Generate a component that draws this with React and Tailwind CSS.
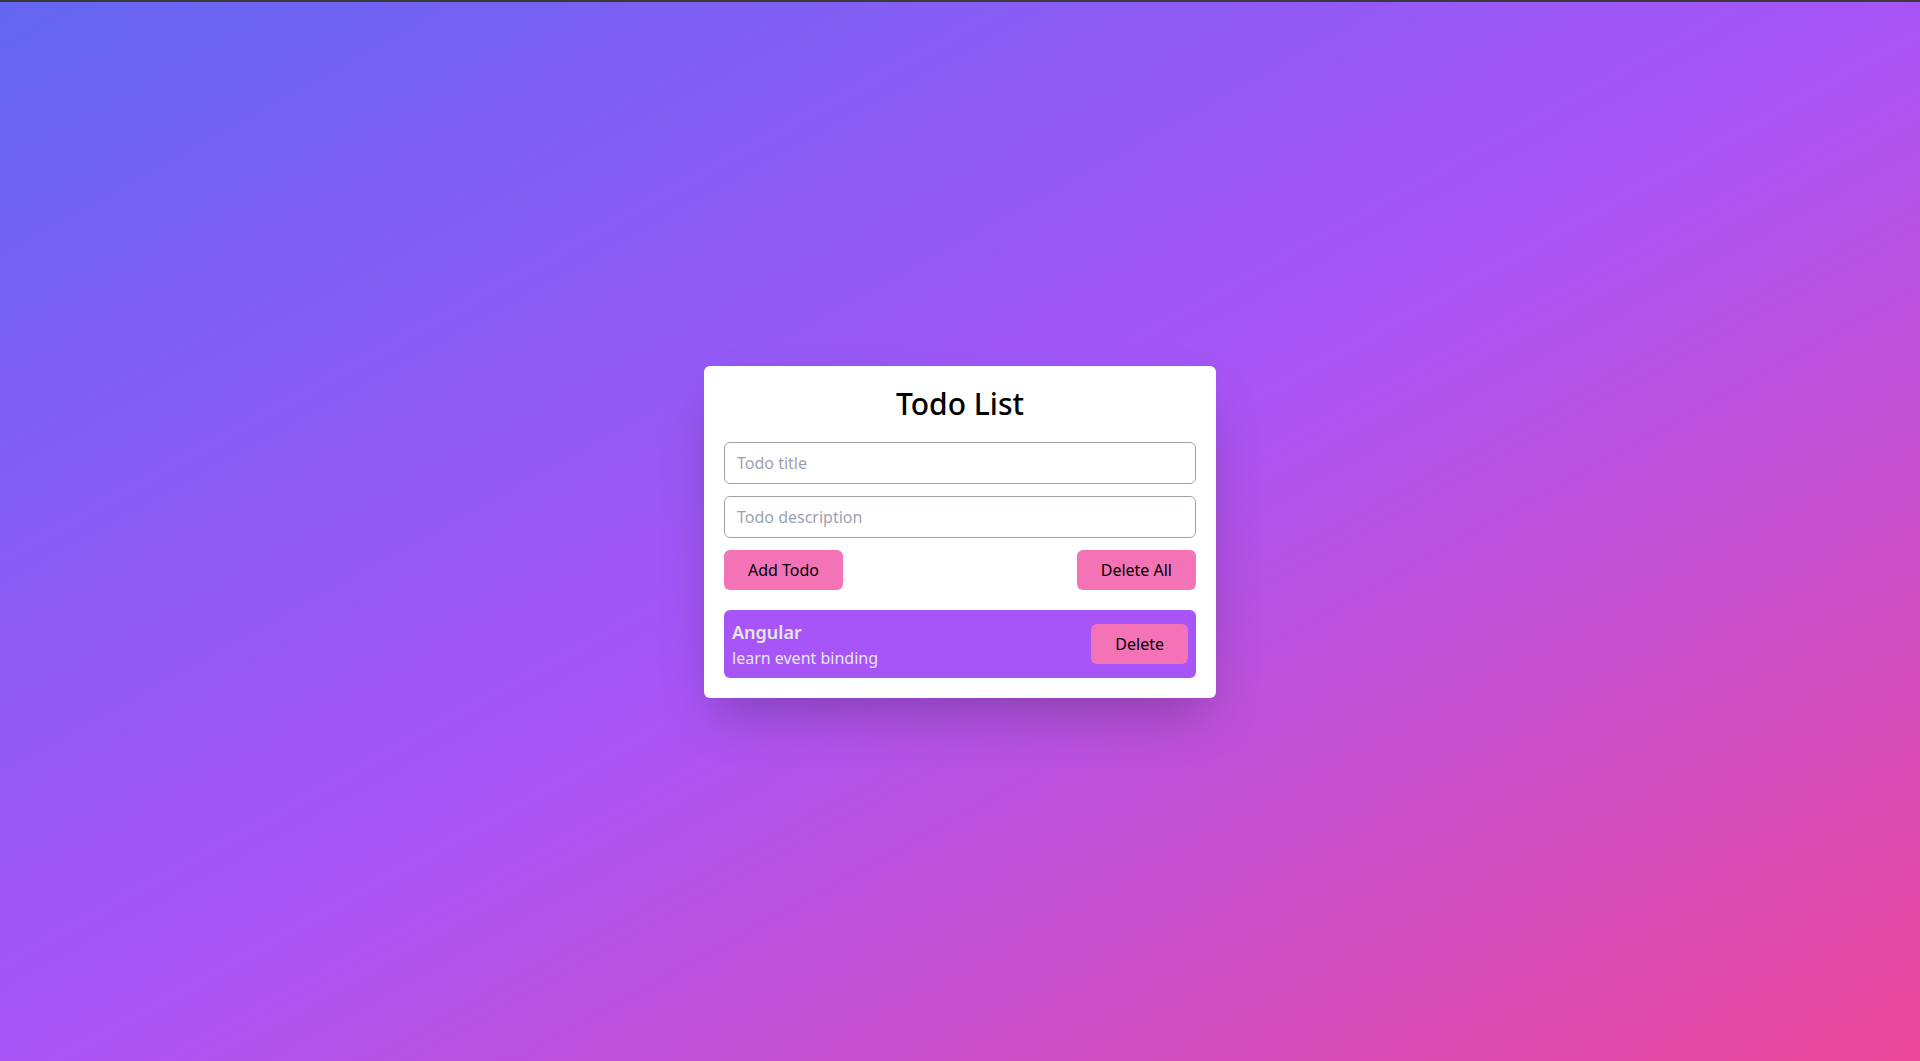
import React, { useState } from 'react'

const App = () => {
    const [title, setTitle] = useState('')
    const [desc, setDesc] = useState('')
    const [todos, setTodos] = useState([{ title: 'Angular', desc: 'learn event binding' }])

    const addTodo = () => {
        if (!title) return
        setTodos([...todos, { title, desc }])
        setTitle('')
        setDesc('')
    }

    return (
        <div
            className="min-h-screen flex items-center justify-center bg-[linear-gradient(to_bottom_right,#6366f1,#a855f7,#ec4899)] border-t-2 border-[#3a3a3a]"
            style={{ fontFamily: '"Noto Sans", "Open Sans", sans-serif' }}
        >
            <div className="w-[512px] bg-white rounded-md shadow-2xl p-5">
                <h1 className="text-3xl font-medium text-black text-center mb-5">Todo List</h1>
                <input
                    type="text"
                    value={title}
                    onChange={(e) => setTitle(e.target.value)}
                    placeholder="Todo title"
                    className="block w-full h-[42px] px-3 mb-3 border border-[#9ca3af] rounded-md text-base placeholder:text-[#9ca3af] outline-none"
                />
                <input
                    type="text"
                    value={desc}
                    onChange={(e) => setDesc(e.target.value)}
                    placeholder="Todo description"
                    className="block w-full h-[42px] px-3 mb-3 border border-[#9ca3af] rounded-md text-base placeholder:text-[#9ca3af] outline-none"
                />
                <div className="flex justify-between mb-5">
                    <button onClick={addTodo} className="h-10 px-6 bg-[#f472b6] text-black rounded-md text-base">
                        Add Todo
                    </button>
                    <button onClick={() => setTodos([])} className="h-10 px-6 bg-[#f472b6] text-black rounded-md text-base">
                        Delete All
                    </button>
                </div>
                {todos.map((todo, i) => (
                    <div key={i} className="flex items-center justify-between bg-[#a855f7] rounded-md p-2 mb-2 last:mb-0">
                        <div>
                            <div className="text-lg font-semibold text-[#e5e7eb]">{todo.title}</div>
                            <div className="text-base text-[#e5e7eb]">{todo.desc}</div>
                        </div>
                        <button
                            onClick={() => setTodos(todos.filter((_, j) => j !== i))}
                            className="h-10 px-6 bg-[#f472b6] text-black rounded-md text-base"
                        >
                            Delete
                        </button>
                    </div>
                ))}
            </div>
        </div>
    )
}
export default App
